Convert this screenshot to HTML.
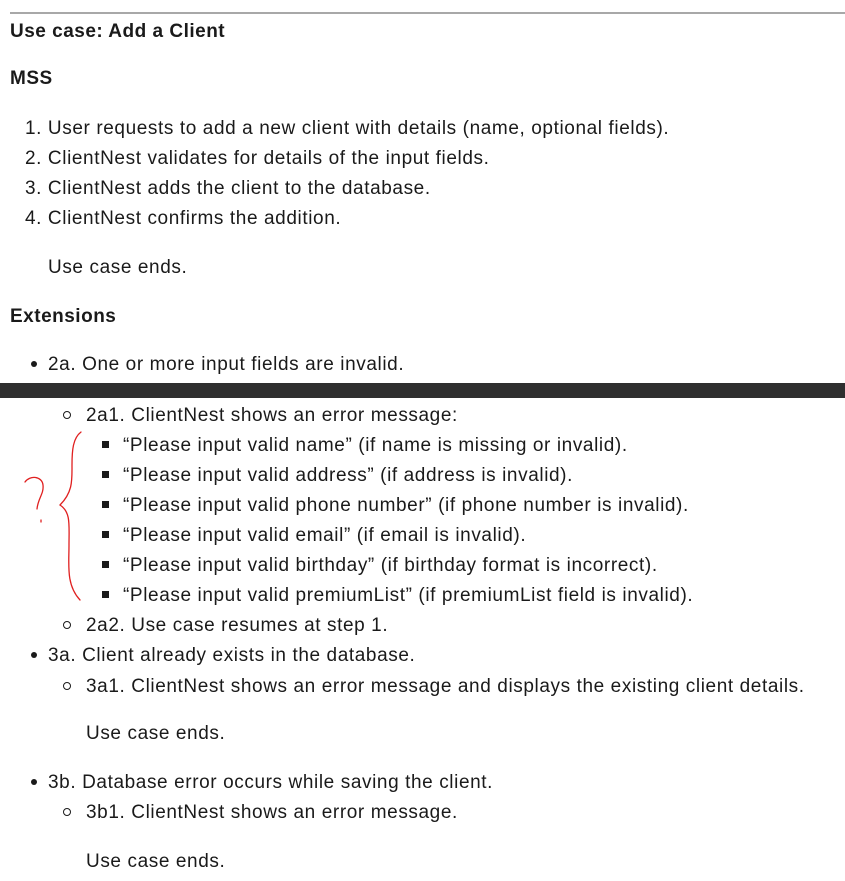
<!DOCTYPE html>
<html><head><meta charset="utf-8"><style>
body{margin:0;width:845px;height:881px;background:#fff;position:relative;overflow:hidden;font-family:"Liberation Sans",sans-serif;color:#1a1a1a;font-size:19px;letter-spacing:0.6px}
.l{position:absolute;white-space:nowrap;line-height:22px;margin-top:1px}
.b{font-weight:bold;letter-spacing:0.5px}
.dot{position:absolute;width:6px;height:6px;border-radius:50%;background:#1a1a1a}
.circ{position:absolute;border-radius:50%;border:1.3px solid #1a1a1a;box-sizing:border-box;width:8px;height:8px}
.sq{position:absolute;width:7px;height:7px;background:#1a1a1a}
</style></head><body>
<div style="position:absolute;left:10px;right:0;top:12px;height:2px;background:#a8a8a8"></div>
<div class="l b" style="left:10px;top:20px">Use case: Add a Client</div>
<div class="l b" style="left:10px;top:67px">MSS</div>
<div class="l" style="left:25px;top:117px">1. User requests to add a new client with details (name, optional fields).</div>
<div class="l" style="left:25px;top:147px">2. ClientNest validates for details of the input fields.</div>
<div class="l" style="left:25px;top:177px">3. ClientNest adds the client to the database.</div>
<div class="l" style="left:25px;top:207px">4. ClientNest confirms the addition.</div>
<div class="l" style="left:48px;top:256px">Use case ends.</div>
<div class="l b" style="left:10px;top:305px">Extensions</div>
<div class="dot" style="left:31px;top:361px"></div>
<div class="l" style="left:48px;top:353px">2a. One or more input fields are invalid.</div>
<div style="position:absolute;left:0;right:0;top:383px;height:15px;background:#2f2f2f"></div>
<div class="circ" style="left:63px;top:411px"></div>
<div class="l" style="left:86px;top:404px">2a1. ClientNest shows an error message:</div>
<div class="sq" style="left:102px;top:441px"></div>
<div class="l" style="left:123px;top:434px">“Please input valid name” (if name is missing or invalid).</div>
<div class="sq" style="left:102px;top:471px"></div>
<div class="l" style="left:123px;top:464px">“Please input valid address” (if address is invalid).</div>
<div class="sq" style="left:102px;top:501px"></div>
<div class="l" style="left:123px;top:494px">“Please input valid phone number” (if phone number is invalid).</div>
<div class="sq" style="left:102px;top:531px"></div>
<div class="l" style="left:123px;top:524px">“Please input valid email” (if email is invalid).</div>
<div class="sq" style="left:102px;top:561px"></div>
<div class="l" style="left:123px;top:554px">“Please input valid birthday” (if birthday format is incorrect).</div>
<div class="sq" style="left:102px;top:591px"></div>
<div class="l" style="left:123px;top:584px">“Please input valid premiumList” (if premiumList field is invalid).</div>
<div class="circ" style="left:63px;top:621px"></div>
<div class="l" style="left:86px;top:614px">2a2. Use case resumes at step 1.</div>
<div class="dot" style="left:31px;top:652px"></div>
<div class="l" style="left:48px;top:644px">3a. Client already exists in the database.</div>
<div class="circ" style="left:63px;top:682px"></div>
<div class="l" style="left:86px;top:675px">3a1. ClientNest shows an error message and displays the existing client details.</div>
<div class="l" style="left:86px;top:722px">Use case ends.</div>
<div class="dot" style="left:31px;top:779px"></div>
<div class="l" style="left:48px;top:771px">3b. Database error occurs while saving the client.</div>
<div class="circ" style="left:63px;top:808px"></div>
<div class="l" style="left:86px;top:801px">3b1. ClientNest shows an error message.</div>
<div class="l" style="left:86px;top:850px">Use case ends.</div>
<svg style="position:absolute;left:0;top:0" width="845" height="881" fill="none" stroke="#e02020" stroke-width="1.3" stroke-linecap="round">
<path d="M81 432 C73 438 72 450 72 465 C72 480 73 492 60 505 C71 512 69 525 69 545 C69 565 66 585 80 600"/>
<path d="M25 482 C30 475 42 476 43 485 C44 494 38 498 37 509"/>
<path d="M41 520 L41 522"/>
</svg>
</body></html>
